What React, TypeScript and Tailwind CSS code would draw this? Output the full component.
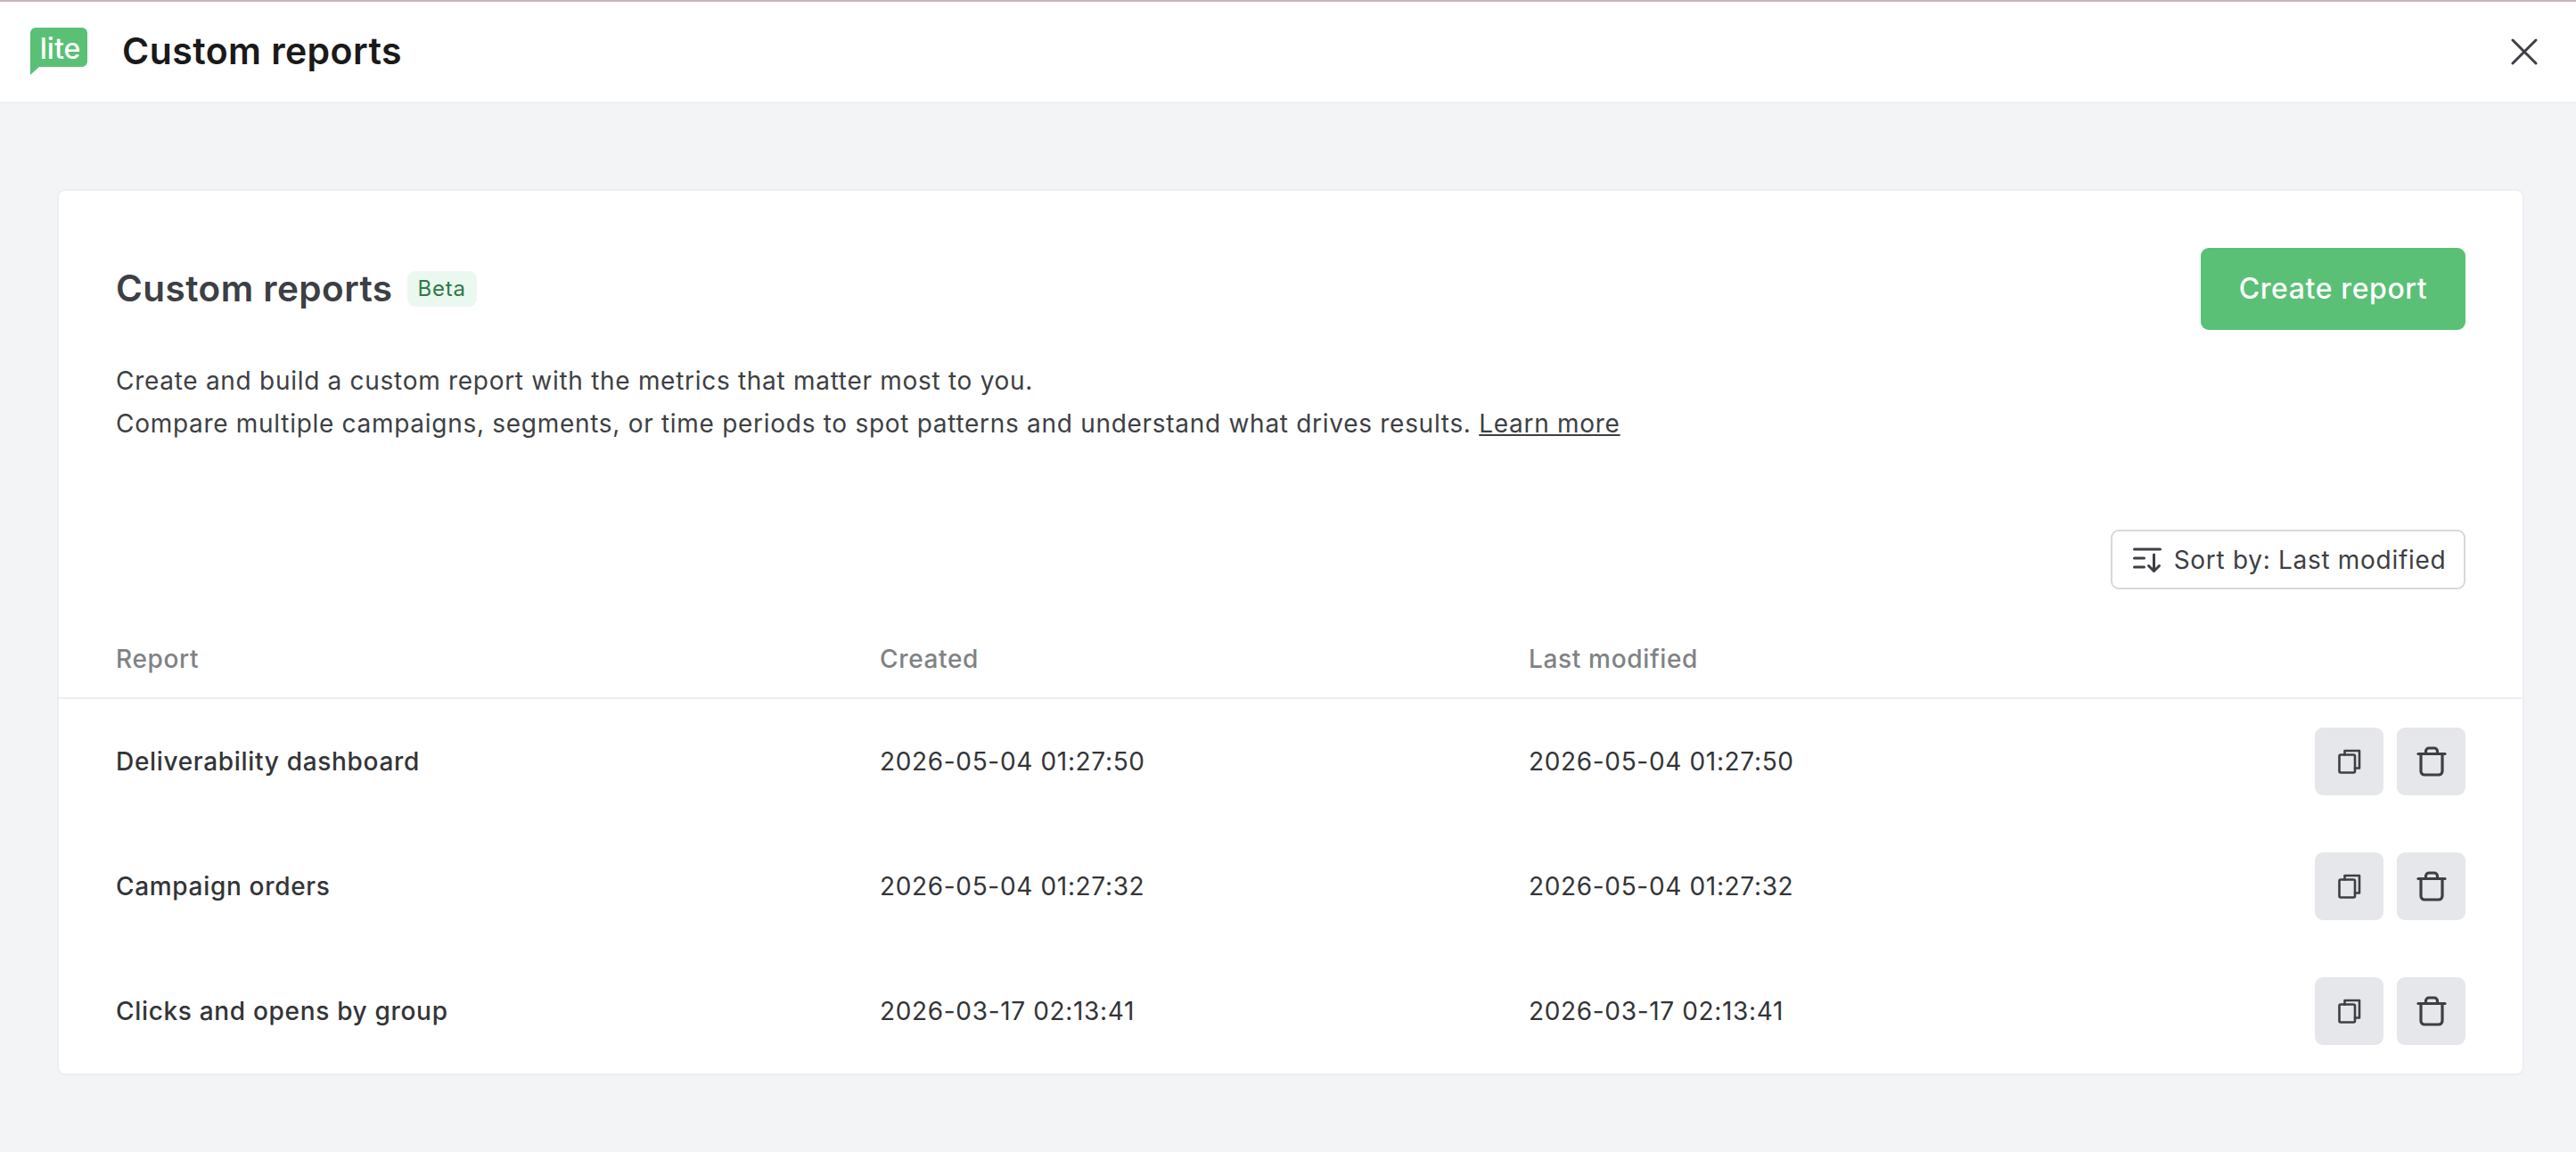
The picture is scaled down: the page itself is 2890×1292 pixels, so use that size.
const font = { fontFamily: 'Inter, sans-serif' };

function CopyIcon() {
  return (
    <svg width="26" height="28" viewBox="0 0 26 28" fill="none" stroke="#3d3f44" strokeWidth="2.6" strokeLinejoin="round" strokeLinecap="round">
      <path d="M7.5 6.5V2h16.5v19.5h-5" />
      <rect x="1.5" y="6.5" width="17.5" height="20" rx="1.5" />
    </svg>
  );
}

function TrashIcon() {
  return (
    <svg width="34" height="34" viewBox="0 0 34 34" fill="none" stroke="#3d3f44" strokeWidth="3.2" strokeLinejoin="round" strokeLinecap="round">
      <path d="M2 8.5h30" />
      <path d="M10.5 8V5.5a3.5 3.5 0 0 1 3.5-3.5h6a3.5 3.5 0 0 1 3.5 3.5V8" />
      <path d="M5 8.5V28a4 4 0 0 0 4 4h16a4 4 0 0 0 4-4V8.5" />
    </svg>
  );
}

function SortIcon() {
  return (
    <svg width="32" height="30" viewBox="0 0 32 30" fill="none" stroke="#3d3f44" strokeWidth="3" strokeLinecap="round" strokeLinejoin="round">
      <path d="M1.5 3h29" />
      <path d="M1.5 13h11" />
      <path d="M1.5 23h11" />
      <path d="M23.5 9v18" />
      <path d="M17.5 21.5l6 6 6-6" />
    </svg>
  );
}

function Row({ name, date }: { name: string; date: string }) {
  return (
    <div className="flex items-center h-[140px] pl-[66px] pr-[65px]">
      <div className="w-[857px] text-[28px] font-medium text-[#333538] tracking-[0.68px]">{name}</div>
      <div className="w-[728px] text-[28px] text-[#333538] tracking-[0.66px]">{date}</div>
      <div className="flex-1 text-[28px] text-[#333538] tracking-[0.66px]">{date}</div>
      <div className="flex gap-[15px]">
        <button className="w-[77px] h-[76px] rounded-[9px] bg-[#e6e7ea] flex items-center justify-center"><CopyIcon /></button>
        <button className="w-[77px] h-[76px] rounded-[9px] bg-[#e6e7ea] flex items-center justify-center"><TrashIcon /></button>
      </div>
    </div>
  );
}

export default function App() {
  return (
    <div className="w-[2890px] h-[1292px] bg-[#f3f4f6] flex flex-col overflow-hidden" style={font}>
      <header className="h-[116px] bg-white border-t-2 border-t-[#c9b4bc] border-b-2 border-b-[#eeeff1] flex items-center shrink-0">
        <svg className="ml-[34px]" width="64" height="54" viewBox="0 0 64 54">
          <path d="M6 0h52a6 6 0 0 1 6 6v32a6 6 0 0 1-6 6H10L0 53V6a6 6 0 0 1 6-6z" fill="#5ac075" />
          <text x="33.5" y="35" textAnchor="middle" fill="#ffffff" fontSize="32" fontWeight="500" fontFamily="Inter, sans-serif">lite</text>
        </svg>
        <h1 className="ml-[39px] text-[41px] font-semibold text-[#1a1a1a] tracking-[0.43px]">Custom reports</h1>
        <svg className="ml-auto mr-[43px]" width="30" height="30" viewBox="0 0 30 30" fill="none" stroke="#3d3f44" strokeWidth="3" strokeLinecap="round">
          <path d="M2 2l26 26M28 2L2 28" />
        </svg>
      </header>
      <main className="flex-1 pl-[64px] pr-[58px] pt-[96px]">
        <section className="h-[994px] bg-white border-2 border-[#eceef0] rounded-[9px] flex flex-col">
          <div className="flex items-center justify-between pt-[64px] pl-[64px] pr-[64px]">
            <div className="flex items-center gap-[16px] h-[64px]">
              <h2 className="text-[40.5px] font-semibold text-[#3d3f44] tracking-[0.45px]">Custom reports</h2>
              <span className="h-[40px] px-[12px] rounded-[9px] bg-[#ebf8f0] text-[#2f7a45] text-[24px] tracking-[0.8px] flex items-center">Beta</span>
            </div>
            <button className="w-[297px] h-[92px] rounded-[9px] bg-[#5ac075] text-white text-[32px] font-medium tracking-[0.6px]">Create report</button>
          </div>
          <p className="pl-[64px] pr-[64px] mt-[33px] text-[28px] leading-[48px] text-[#3d3f44] tracking-[0.71px]">
            Create and build a custom report with the metrics that matter most to you.<br />
            Compare multiple campaigns, segments, or time periods to spot patterns and understand what drives results. <a className="underline">Learn more</a>
          </p>
          <div className="flex justify-end pr-[64px] mt-[95px]">
            <button className="w-[398px] h-[67px] pl-[3px] rounded-[9px] border-2 border-[#d5d8dc] flex items-center justify-center gap-[14px] text-[28px] text-[#3d3f44] tracking-[0.7px]">
              <SortIcon />Sort by: Last modified
            </button>
          </div>
          <div className="flex items-center h-[123px] pt-[34px] pl-[64px] pr-[64px] border-b-2 border-b-[#eeeff1] text-[28px] font-medium text-[#808285] tracking-[0.66px]">
            <div className="w-[857px]">Report</div>
            <div className="w-[728px]">Created</div>
            <div>Last modified</div>
          </div>
          <div className="-ml-[2px] -mr-[1px]">
            <Row name="Deliverability dashboard" date="2026-05-04 01:27:50" />
            <Row name="Campaign orders" date="2026-05-04 01:27:32" />
            <Row name="Clicks and opens by group" date="2026-03-17 02:13:41" />
          </div>
        </section>
      </main>
    </div>
  );
}
